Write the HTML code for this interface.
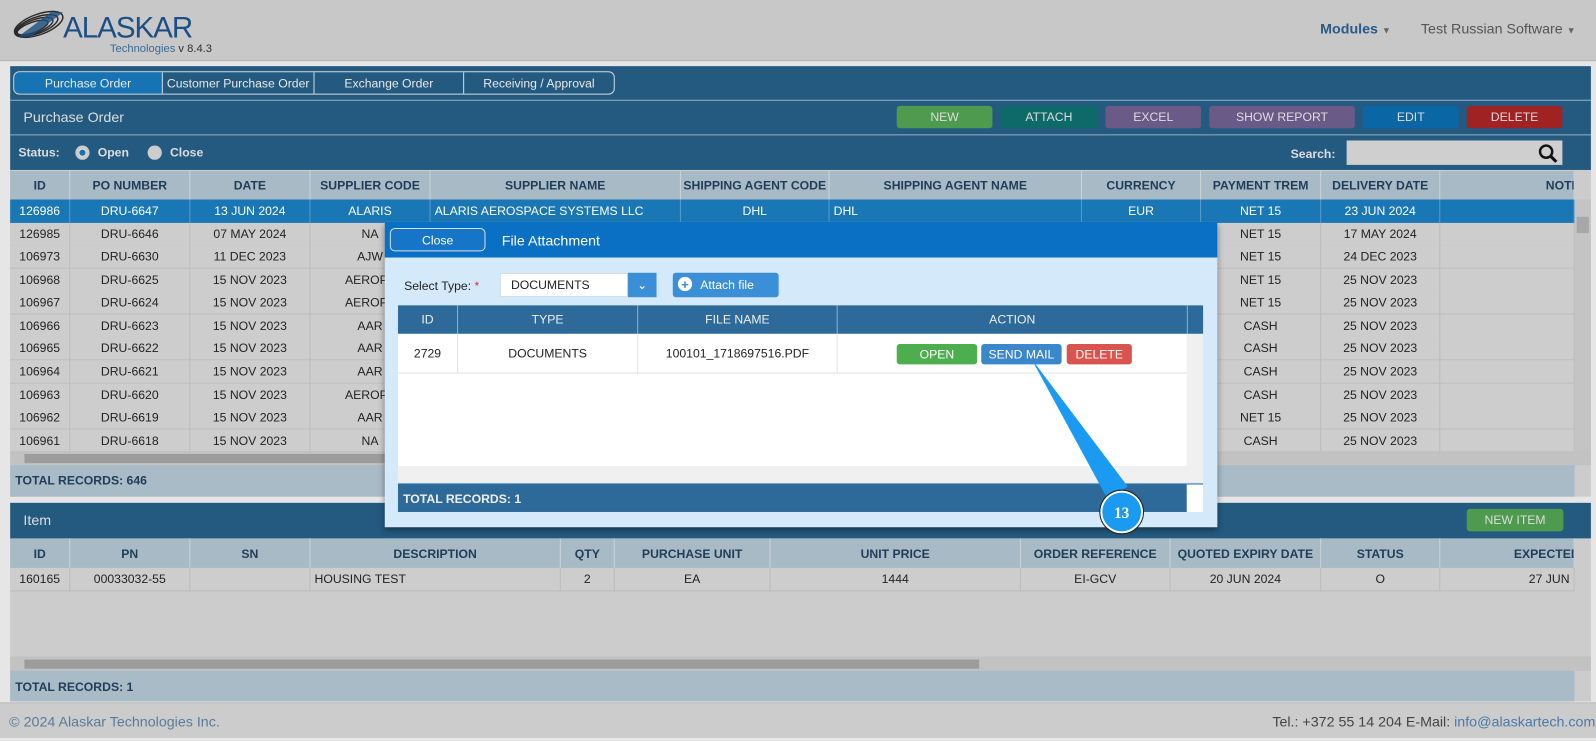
<!DOCTYPE html>
<html><head><meta charset="utf-8"><style>
*{box-sizing:border-box;margin:0;padding:0}
body{width:1596px;height:741px;overflow:hidden;background:#e6e6e6;font-family:"Liberation Sans",sans-serif;font-size:12px;color:#222;position:relative}
#w{position:absolute;left:0;top:0;width:1568px;height:728px;transform:scale(1.017857);transform-origin:0 0}
.a{position:absolute}
.c{display:flex;align-items:center;justify-content:center;text-align:center}
.btn{position:absolute;height:22px;border-radius:3px;color:#ddd;display:flex;align-items:center;justify-content:center;font-size:12px}
.th{position:absolute;font-weight:bold;color:#1f3d58;font-size:12px;display:flex;align-items:center;justify-content:center;border-right:1px solid #c9d3da;white-space:nowrap;overflow:hidden}
.td{position:absolute;display:flex;align-items:center;justify-content:center;border-right:1px solid #bcbcbc;white-space:nowrap;overflow:hidden;font-size:12px}
</style></head><body><div id="w">
<!-- header -->
<div class="a" style="left:0;top:0;width:1568px;height:60px;background:#c8c8c8;border-bottom:1px solid #b5b5b5"></div>
<svg class="a" style="left:10px;top:8px" width="60" height="32" viewBox="0 0 60 32"><g fill="none" stroke="#2a2a2a" stroke-width="1.4"><ellipse cx="28" cy="16" rx="25" ry="10" transform="rotate(-20 28 16)"/><ellipse cx="26" cy="17" rx="22" ry="8" transform="rotate(-20 26 17)"/><ellipse cx="24" cy="18" rx="19" ry="6.5" transform="rotate(-20 24 18)"/><ellipse cx="22" cy="19" rx="16" ry="5" transform="rotate(-20 22 19)"/></g><path d="M8 28 L40 4 L52 4 L20 28Z" fill="#1b4f80" opacity=".8"/></svg>
<div class="a" style="left:62px;top:12px;font-size:29px;color:#1d4f86;letter-spacing:-1px">ALASKAR</div>
<div class="a" style="left:108px;top:42px;font-size:11px;color:#3a6a9a">Technologies <span style="color:#333">v 8.4.3</span></div>
<div class="a" style="left:1297px;top:20px;font-size:14px;font-weight:bold;color:#2a5a88">Modules <span style="font-size:9px;color:#666">▼</span></div>
<div class="a" style="left:1396px;top:20px;font-size:14px;color:#555">Test Russian Software <span style="font-size:9px;color:#666">▼</span></div>
<!-- main panel -->
<div class="a" style="left:10px;top:65px;width:1553px;height:102px;background:#245a80"></div>
<div class="a" style="left:13px;top:70px;width:591px;height:23px;border:1px solid #d0dbe3;border-radius:6px;overflow:hidden;display:flex;color:#e8e8e8;font-size:12px">
<div class="c" style="width:146px;background:#1774b4;border-right:1px solid #d0dbe3">Purchase Order</div>
<div class="c" style="width:149px;border-right:1px solid #d0dbe3">Customer Purchase Order</div>
<div class="c" style="width:147px;border-right:1px solid #d0dbe3">Exchange Order</div>
<div class="c" style="flex:1">Receiving / Approval</div></div>
<div class="a" style="left:10px;top:98px;width:1553px;height:1px;background:#8fb0c8"></div>
<div class="a" style="left:23px;top:107px;font-size:14px;color:#ddd">Purchase Order</div>
<div class="btn" style="left:881px;top:104px;width:94px;background:#4e9a4e">NEW</div>
<div class="btn" style="left:983px;top:104px;width:95px;background:#0e6a68">ATTACH</div>
<div class="btn" style="left:1086px;top:104px;width:94px;background:#6a5a88">EXCEL</div>
<div class="btn" style="left:1188px;top:104px;width:143px;background:#6a5a88">SHOW REPORT</div>
<div class="btn" style="left:1339px;top:104px;width:94px;background:#0b66a6">EDIT</div>
<div class="btn" style="left:1441px;top:104px;width:94px;background:#a02222">DELETE</div>
<div class="a" style="left:10px;top:132px;width:1553px;height:1px;background:#8fb0c8"></div>
<div class="a" style="left:18px;top:143px;font-weight:bold;color:#ddd">Status:</div>
<div class="a" style="left:74px;top:143px;width:14px;height:14px;border-radius:50%;background:#ddd;border:3px solid #ccc"><div style="margin:1px;width:6px;height:6px;border-radius:50%;background:#1770b0"></div></div>
<div class="a" style="left:96px;top:143px;font-weight:bold;color:#ddd">Open</div>
<div class="a" style="left:145px;top:143px;width:14px;height:14px;border-radius:50%;background:#ccc"></div>
<div class="a" style="left:167px;top:143px;font-weight:bold;color:#ddd">Close</div>
<div class="a" style="left:1268px;top:144px;font-weight:bold;color:#ddd">Search:</div>
<div class="a" style="left:1323px;top:138px;width:212px;height:24px;background:#cfcfcf"></div>
<svg class="a" style="left:1511px;top:141px" width="20" height="20" viewBox="0 0 20 20"><circle cx="8" cy="8" r="6" fill="none" stroke="#111" stroke-width="2.4"/><path d="M12.5 12.5 L18 18" stroke="#111" stroke-width="3"/></svg>
<!-- top table -->
<div class="a" style="left:10px;top:167px;width:1553px;height:321px;background:#cccccc"></div>
<div class="a" style="left:10px;top:168px;width:1537px;height:28px;background:#a9bac7"></div>
<div id="th1"></div>
<div class="a" style="left:1547px;top:196px;width:16px;height:247px;background:#c4c4c4"></div>
<div class="a" style="left:1549px;top:213px;width:12px;height:16px;background:#a8a8a8"></div>
<div class="a" style="left:10px;top:443px;width:1553px;height:14px;background:#c2c2c2"></div>
<div class="a" style="left:24px;top:446px;width:360px;height:9px;background:#9c9c9c"></div>
<div class="a" style="left:10px;top:457px;width:1537px;height:31px;background:#aabbc8;font-weight:bold;color:#1f3d58;padding:8px 5px">TOTAL RECORDS: 646</div>
<!-- item panel -->
<div class="a" style="left:10px;top:494px;width:1553px;height:35px;background:#245a80"></div>
<div class="a" style="left:23px;top:503px;font-size:14px;color:#ddd">Item</div>
<div class="btn" style="left:1441px;top:500px;width:95px;background:#4e9a4e">NEW ITEM</div>
<div class="a" style="left:10px;top:529px;width:1553px;height:160px;background:#cccccc"></div>
<div class="a" style="left:10px;top:529px;width:1537px;height:29px;background:#a9bac7"></div>
<div id="th2"></div>
<div class="a" style="left:10px;top:645px;width:1553px;height:14px;background:#c2c2c2"></div>
<div class="a" style="left:24px;top:648px;width:938px;height:9px;background:#9c9c9c"></div>
<div class="a" style="left:10px;top:659px;width:1537px;height:30px;background:#aabbc8;font-weight:bold;color:#1f3d58;padding:9px 5px">TOTAL RECORDS: 1</div>
<!-- footer -->
<div class="a" style="left:0;top:690px;width:1568px;height:35px;background:#cccccc;border-top:1px solid #bbb"></div>
<div class="a" style="left:9px;top:701px;font-size:14px;color:#5a7a9a">© 2024 Alaskar Technologies Inc.</div>
<div class="a" style="left:1250px;top:701px;font-size:14px;color:#444">Tel.: +372 55 14 204 E-Mail: <span style="color:#4a7aa8">info@alaskartech.com</span></div>
<!-- modal -->
<div class="a" style="left:378px;top:218px;width:818px;height:300px;background:#d4e9f9;box-shadow:0 3px 6px rgba(0,0,0,.4)"></div>
<div class="a" style="left:378px;top:218px;width:818px;height:35px;background:#0a70c4"></div>
<div class="a c" style="left:383px;top:224px;width:94px;height:23px;border:1px solid #cfe2f2;border-radius:5px;background:#1775c8;color:#fff;font-size:12px">Close</div>
<div class="a" style="left:493px;top:228px;font-size:14px;color:#fff">File Attachment</div>
<div class="a" style="left:397px;top:274px;font-size:12px;color:#222">Select Type: <span style="color:#d33">*</span></div>
<div class="a" style="left:491px;top:268px;width:126px;height:24px;background:#fff;border:1px solid #c8d8e4;padding:4px 10px;font-size:12px">DOCUMENTS</div>
<div class="a c" style="left:617px;top:268px;width:28px;height:24px;background:#3a8fd6;color:#fff;font-size:12px">⌄</div>
<div class="a" style="left:661px;top:268px;width:104px;height:24px;background:#3a8fd6;border-radius:3px;color:#fff;font-size:12px;padding:5px 0 0 27px">Attach file</div>
<div class="a c" style="left:666px;top:272px;width:14px;height:14px;border-radius:50%;background:#fff;color:#3a8fd6;font-weight:bold;font-size:13px;line-height:1">+</div>
<div class="a" style="left:391px;top:300px;width:791px;height:28px;background:#2d6a9a"></div>
<div class="a c" style="left:391px;top:300px;width:59px;height:28px;color:#eee;border-right:1px solid #8fb0c8">ID</div>
<div class="a c" style="left:450px;top:300px;width:177px;height:28px;color:#eee;border-right:1px solid #8fb0c8">TYPE</div>
<div class="a c" style="left:627px;top:300px;width:196px;height:28px;color:#eee;border-right:1px solid #8fb0c8">FILE NAME</div>
<div class="a c" style="left:823px;top:300px;width:344px;height:28px;color:#eee;border-right:1px solid #8fb0c8">ACTION</div>
<div class="a" style="left:391px;top:328px;width:775px;height:130px;background:#fff"></div>
<div class="a" style="left:1166px;top:328px;width:16px;height:146px;background:#f0f0f0"></div>
<div class="a" style="left:391px;top:366px;width:775px;height:1px;background:#e4e4e4"></div>
<div class="a c" style="left:391px;top:328px;width:59px;height:38px;border-right:1px solid #e4e4e4">2729</div>
<div class="a c" style="left:450px;top:328px;width:177px;height:38px;border-right:1px solid #e4e4e4">DOCUMENTS</div>
<div class="a c" style="left:627px;top:328px;width:196px;height:38px;border-right:1px solid #e4e4e4">100101_1718697516.PDF</div>
<div class="btn" style="left:881px;top:338px;width:79px;height:20px;background:#4cae4c;color:#fff">OPEN</div>
<div class="btn" style="left:964px;top:338px;width:79px;height:20px;background:#3a87cc;color:#fff">SEND MAIL</div>
<div class="btn" style="left:1048px;top:338px;width:64px;height:20px;background:#d9534f;color:#fff">DELETE</div>
<div class="a" style="left:391px;top:458px;width:775px;height:16px;background:#f0f0f0"></div>
<div class="a" style="left:391px;top:475px;width:775px;height:28px;background:#2d6a9a;color:#eee;font-weight:bold;padding:8px 5px">TOTAL RECORDS: 1</div>
<div class="a" style="left:1166px;top:475px;width:16px;height:28px;background:#fff;border-top:1px solid #2d6a9a"></div>
<!-- callout -->
<svg class="a" style="left:1000px;top:340px" width="140" height="190"><path d="M13 12 L108 138 L88 150 Z" fill="#1a9af0"/><circle cx="102" cy="163" r="20" fill="#1a9af0" stroke="#fff" stroke-width="2"/><circle cx="102" cy="163" r="21.5" fill="none" stroke="#222" stroke-width="1"/><text x="102" y="169" text-anchor="middle" fill="#fff" font-family="Liberation Serif" font-weight="bold" font-size="15">13</text></svg>
<script>
function build(id,cols,hy,hh,rows,ry,rh,align){
 var h='';
 for(var i=0;i<cols.length;i++){var c=cols[i];h+='<div class="th" style="left:'+c[0]+'px;top:'+hy+'px;width:'+c[1]+'px;height:'+hh+'px">'+c[2]+'</div>';}
 rows.forEach(function(r,j){
  var sel=r.sel, top=ry[j], bg=sel?'#1a77b5':'#cdcdcd';
  h+='<div class="a" style="left:10px;top:'+top+'px;width:1537px;height:'+rh+'px;background:'+bg+';border-bottom:1px solid '+(sel?'#1a77b5':'#bdbdbd')+'"></div>';
  for(var i=0;i<cols.length;i++){var c=cols[i];var al=(align&&align[i])||'center';
   h+='<div class="td" style="left:'+c[0]+'px;top:'+top+'px;width:'+c[1]+'px;height:'+rh+'px;justify-content:'+al+';padding:0 4px;color:'+(sel?'#fff':'#222')+';border-color:'+(sel?'#5a9acb':'#bcbcbc')+'">'+(r.v[i]||'')+'</div>';}
 });
 document.getElementById(id).outerHTML=h;
}
var c1=[[10,59,'ID'],[69,118,'PO NUMBER'],[187,118,'DATE'],[305,118,'SUPPLIER CODE'],[423,246,'SUPPLIER NAME'],[669,146,'SHIPPING AGENT CODE'],[815,248,'SHIPPING AGENT NAME'],[1063,117,'CURRENCY'],[1180,118,'PAYMENT TREM'],[1298,117,'DELIVERY DATE'],[1415,132,'<span style="margin-left:auto;margin-right:-6px">NOTE</span>']];
var d=[['126986','DRU-6647','13 JUN 2024','ALARIS','ALARIS AEROSPACE SYSTEMS LLC','DHL','DHL','EUR','NET 15','23 JUN 2024'],
['126985','DRU-6646','07 MAY 2024','NA','','','','','NET 15','17 MAY 2024'],
['106973','DRU-6630','11 DEC 2023','AJW','','','','','NET 15','24 DEC 2023'],
['106968','DRU-6625','15 NOV 2023','AEROPA','','','','','NET 15','25 NOV 2023'],
['106967','DRU-6624','15 NOV 2023','AEROPA','','','','','NET 15','25 NOV 2023'],
['106966','DRU-6623','15 NOV 2023','AAR','','','','','CASH','25 NOV 2023'],
['106965','DRU-6622','15 NOV 2023','AAR','','','','','CASH','25 NOV 2023'],
['106964','DRU-6621','15 NOV 2023','AAR','','','','','CASH','25 NOV 2023'],
['106963','DRU-6620','15 NOV 2023','AEROPA','','','','','CASH','25 NOV 2023'],
['106962','DRU-6619','15 NOV 2023','AAR','','','','','NET 15','25 NOV 2023'],
['106961','DRU-6618','15 NOV 2023','NA','','','','','CASH','25 NOV 2023']];
var ry=[196,219,241,264,286,309,331,354,377,399,422];
build('th1',c1,168,28,d.map(function(v,i){return{v:v,sel:i==0}}),ry,22.6,[0,0,0,0,'flex-start',0,'flex-start']);
var c2=[[10,59,'ID'],[69,118,'PN'],[187,118,'SN'],[305,246,'DESCRIPTION'],[551,53,'QTY'],[604,153,'PURCHASE UNIT'],[757,246,'UNIT PRICE'],[1003,147,'ORDER REFERENCE'],[1150,148,'QUOTED EXPIRY DATE'],[1298,117,'STATUS'],[1415,132,'<span style="margin-left:auto;margin-right:-6px">EXPECTED</span>']];
build('th2',c2,529,29,[{v:['160165','00033032-55','','HOUSING TEST','2','EA','1444','EI-GCV','20 JUN 2024','O','27 JUN']}],[558],22.6,[0,0,0,'flex-start',0,0,0,0,0,0,'flex-end']);
</script>
</div></body></html>
